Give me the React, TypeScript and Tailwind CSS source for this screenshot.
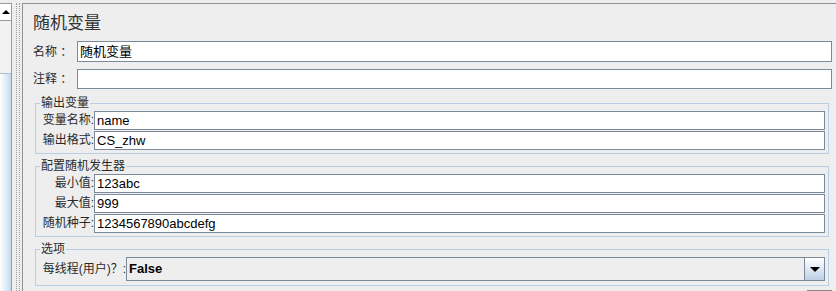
const cjk = "font-['Liberation_Sans','Noto_Sans_CJK_SC',sans-serif]";

function Field({ value, className = '' }: { value?: string; className?: string }) {
  return (
    <div
      className={`flex-1 h-[19px] bg-white border border-[#7a8a99] pl-[2px] text-[13px] leading-[17px] text-black whitespace-nowrap overflow-hidden ${className}`}
    >
      {value}
    </div>
  );
}

function Row({ label, value, labelWidth }: { label: string; value: string; labelWidth: string }) {
  return (
    <div className="flex items-center h-[20px]">
      <div className={`${labelWidth} shrink-0 text-right text-[12px] text-[#2a2a2a] whitespace-nowrap`}>{label}</div>
      <Field value={value} />
    </div>
  );
}

function Group({ title, children, className = '' }: { title: string; children: React.ReactNode; className?: string }) {
  return (
    <fieldset className={`ml-[2px] mr-[3px] border border-[#b8cfe5] pl-[4px] pr-[3px] pb-[3px] ${className}`}>
      <legend className="px-[1px] text-[12px] leading-[14px] text-[#2a2a2a]">{title}</legend>
      {children}
    </fieldset>
  );
}

export default function App() {
  return (
    <div className={`w-[836px] h-[291px] overflow-hidden flex bg-[#eeeeee] ${cjk}`}>
      {/* left tree scrollbar */}
      <div className="w-[12px] shrink-0 mt-[3px] flex flex-col border-r border-[#9a9a9a] border-t">
        <div className="h-[17px] bg-white border-b border-[#9a9a9a] flex items-center justify-center">
          <div className="w-0 h-0 border-l-[4px] border-r-[4px] border-b-[4px] border-l-transparent border-r-transparent border-b-black" />
        </div>
        <div className="h-[52px] bg-[#f2f2f2]" />
        <div className="flex-1 bg-gradient-to-r from-white to-[#c6d9ee] border-t border-[#a9bfd6]" />
      </div>

      {/* splitter */}
      <div className="w-[10px] shrink-0 flex justify-center pl-[2px] pt-[3px]">
        <div className="w-[4px] h-full border-x border-dotted border-[#9c9c9c]" />
      </div>

      {/* main panel */}
      <div className="flex-1 mt-[3px] border-t border-l border-[#8e8f8f] pl-[10px] pr-[4px] flex flex-col">
        <div className="mt-[9px] text-[17px] leading-[22px] text-[#333]">随机变量</div>

        <div className="mt-[6px] flex items-center">
          <div className="w-[44px] shrink-0 text-[12px] text-[#2a2a2a] whitespace-pre">名称 ：</div>
          <Field value="随机变量" className="h-[21px] leading-[19px]" />
        </div>
        <div className="mt-[7px] flex items-center">
          <div className="w-[44px] shrink-0 text-[12px] text-[#2a2a2a] whitespace-pre">注释 ：</div>
          <Field className="h-[20px]" />
        </div>

        <Group title="输出变量" className="mt-[7px]">
          <Row label="变量名称:" value="name" labelWidth="w-[54px]" />
          <Row label="输出格式:" value="CS_zhw" labelWidth="w-[54px]" />
        </Group>

        <Group title="配置随机发生器" className="mt-[5px]">
          <Row label="最小值:" value="123abc" labelWidth="w-[54px]" />
          <Row label="最大值:" value="999" labelWidth="w-[54px]" />
          <Row label="随机种子:" value="1234567890abcdefg" labelWidth="w-[54px]" />
        </Group>

        <Group title="选项" className="mt-[5px]">
          <div className="flex items-center h-[26px]">
            <div className="w-[86px] shrink-0 text-right text-[12px] text-[#2a2a2a] whitespace-nowrap">每线程(用户)？:</div>
            <div className="flex-1 flex h-[24px]">
              <div className="flex-1 bg-[#eeeeee] border border-[#7a8a99] pl-[2px] text-[13px] font-bold leading-[22px] text-black">
                False
              </div>
              <div className="w-[20px] shrink-0 border border-l-0 border-[#7a8a99] bg-gradient-to-b from-white to-[#bcd0e6] flex items-center justify-center">
                <div className="w-0 h-0 border-l-[5px] border-r-[5px] border-t-[5px] border-l-transparent border-r-transparent border-t-black" />
              </div>
            </div>
          </div>
        </Group>

        <div className="mt-auto flex justify-end">
          <div className="w-[25px] h-[1px] bg-[#888]" />
        </div>
      </div>
    </div>
  );
}
